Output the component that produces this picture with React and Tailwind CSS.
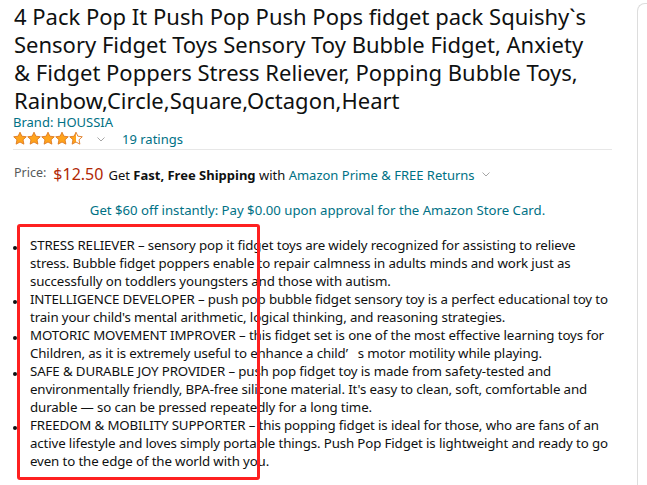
import React from "react";

const title = [
  "4 Pack Pop It Push Pop Push Pops fidget pack Squishy`s",
  "Sensory Fidget Toys Sensory Toy Bubble Fidget, Anxiety",
  "& Fidget Poppers Stress Reliever, Popping Bubble Toys,",
  "Rainbow,Circle,Square,Octagon,Heart",
];

const bullets = [
  [
    "STRESS RELIEVER – sensory pop it fidget toys are widely recognized for assisting to relieve",
    "stress. Bubble fidget poppers enable to repair calmness in adults minds and work just as",
    "successfully on toddlers youngsters and those with autism.",
  ],
  [
    "INTELLIGENCE DEVELOPER – push pop bubble fidget sensory toy is a perfect educational toy to",
    "train your child's mental arithmetic, logical thinking, and reasoning strategies.",
  ],
  [
    "MOTORIC MOVEMENT IMPROVER – this fidget set is one of the most effective learning toys for",
    "Children, as it is extremely useful to enhance a child’\u2002 s motor motility while playing.",
  ],
  [
    "SAFE & DURABLE JOY PROVIDER – push pop fidget toy is made from safety-tested and",
    "environmentally friendly, BPA-free silicone material. It's easy to clean, soft, comfortable and",
    "durable — so can be pressed repeatedly for a long time.",
  ],
  [
    "FREEDOM & MOBILITY SUPPORTER – this popping fidget is ideal for those, who are fans of an",
    "active lifestyle and loves simply portable things. Push Pop Fidget is lightweight and ready to go",
    "even to the edge of the world with you.",
  ],
];

const STAR =
  "7,0.2 8.88,4.21 13.28,4.76 10.04,7.79 10.88,12.14 7,10 3.12,12.14 3.96,7.79 0.72,4.76 5.12,4.21";

function Stars() {
  return (
    <svg width="70" height="13" viewBox="0 0 70 13" className="mt-[2px] shrink-0">
      <defs>
        <linearGradient id="halfStar" x1="0" x2="1" y1="0" y2="0">
          <stop offset="50%" stopColor="#ffa41c" />
          <stop offset="50%" stopColor="#ffffff" />
        </linearGradient>
      </defs>
      {[0, 1, 2, 3, 4].map((i) => (
        <polygon
          key={i}
          points={STAR}
          transform={`translate(${i * 14} 0)`}
          fill={i === 4 ? "url(#halfStar)" : "#ffa41c"}
          stroke="#de7921"
          strokeWidth="0.9"
          strokeLinejoin="round"
        />
      ))}
    </svg>
  );
}

function Chevron({ className }) {
  return (
    <svg width="8" height="5" viewBox="0 0 8 5" className={className}>
      <polyline points="0.5,0.5 4,4 7.5,0.5" fill="none" stroke="#a6a6a6" strokeWidth="1" />
    </svg>
  );
}

export default function App() {
  return (
    <div className="relative flex h-[485px] w-[647px] overflow-hidden bg-white font-['Noto_Sans',sans-serif] text-[#0f1111]">
      <main className="ml-[13px] w-[599px] shrink-0 pt-[2px]">
        <h1 className="whitespace-nowrap text-[22px] font-normal leading-[28px]">
          {title.map((line) => (
            <div key={line} className="pl-[1px]">
              {line}
            </div>
          ))}
        </h1>
        <a className="block text-[13px] leading-4 text-[#007185]">Brand: HOUSSIA</a>

        <div className="flex h-[19px] items-start">
          <Stars />
          <Chevron className="ml-[14px] mt-[7px]" />
          <a className="ml-[17px] text-[13px] leading-[18px] text-[#007185]">19 ratings</a>
        </div>
        <hr className="border-t border-[#e7e7e7]" />

        <div className="mt-[11px] whitespace-nowrap text-[13px] leading-[24px]">
          <span className="ml-[1px] align-[3px] text-[12.5px] text-[#565959]">Price:</span>
          <span className="ml-[7px] text-[16px] text-[#b12704]">$12.50</span>
          <span className="ml-[5px]">
            Get <b className="font-bold">Fast, Free Shipping</b> with{" "}
            <a className="text-[#007185]">Amazon Prime &amp; FREE Returns</a>
          </span>
          <Chevron className="ml-[7px] inline-block align-[3px]" />
        </div>

        <p className="mt-[14px] pl-[10px] text-center text-[13.2px] leading-[18px] text-[#007185]">
          Get $60 off instantly: Pay $0.00 upon approval for the Amazon Store Card.
        </p>

        <ul className="mt-[17px] text-[13.3px] leading-[18px] tracking-[-0.01em]">
          {bullets.map((lines) => (
            <li key={lines[0]} className="flex">
              <span className="mr-[13px] mt-[10px] h-1 w-1 shrink-0 rounded-full bg-[#0f1111]" />
              <span className="whitespace-nowrap">
                {lines.map((l) => (
                  <div key={l}>{l}</div>
                ))}
              </span>
            </li>
          ))}
        </ul>
      </main>

      <aside className="ml-[25px] mt-[3px] flex-1 rounded-tl-lg border-l border-t border-[#dddddd]" />

      <div className="absolute left-[17px] top-[224px] h-[256px] w-[243px] rounded-[3px] border-[3px] border-[#fe2020]" />
    </div>
  );
}
